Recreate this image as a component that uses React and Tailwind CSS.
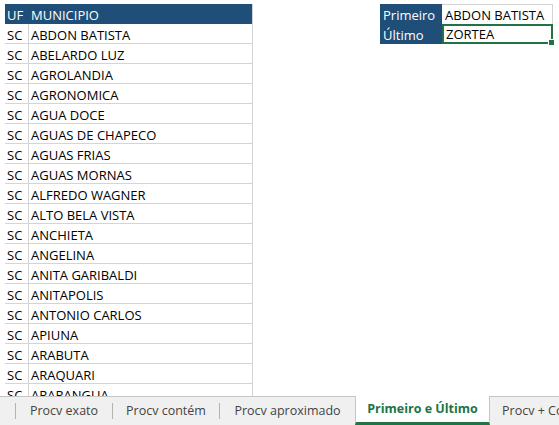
const rows = ["ABDON BATISTA","ABELARDO LUZ","AGROLANDIA","AGRONOMICA","AGUA DOCE","AGUAS DE CHAPECO","AGUAS FRIAS","AGUAS MORNAS","ALFREDO WAGNER","ALTO BELA VISTA","ANCHIETA","ANGELINA","ANITA GARIBALDI","ANITAPOLIS","ANTONIO CARLOS","APIUNA","ARABUTA","ARAQUARI","ARARANGUA"];

export default function App() {
  return (
    <div className="w-[559px] h-[425px] bg-white flex flex-col overflow-hidden" style={{fontFamily: '"Open Sans", "Liberation Sans", sans-serif'}}>
      <div className="flex-1 overflow-hidden flex items-start pt-[4px] pl-[5px] text-[13px] leading-[18px] text-black">
        <div className="w-[248px] border-r border-[#d4d4d4] shrink-0">
          <div className="flex h-[20px] pt-[2px] bg-[#1f4e78] text-white">
            <div className="w-[23px] pl-[2px]">UF</div>
            <div className="flex-1 pl-[3px]">MUNICIPIO</div>
          </div>
          {rows.map((r) => (
            <div key={r} className="flex h-[20px] border-b border-[#d4d4d4]">
              <div className="w-[24px] pl-[2px] pt-[2px] border-r border-[#d4d4d4]">SC</div>
              <div className="flex-1 pl-[2px] pt-[2px]">{r}</div>
            </div>
          ))}
        </div>
        <div className="ml-[127px] flex shrink-0">
          <div className="w-[62px] bg-[#1f4e78] text-white">
            <div className="h-[20px] pl-[3px] pt-[2px]">Primeiro</div>
            <div className="h-[20px] pl-[3px] pt-[2px]">Último</div>
          </div>
          <div className="w-[111px]">
            <div className="h-[20px] pl-[3px] pt-px border-t border-r border-[#d4d4d4] leading-[19px]">ABDON BATISTA</div>
            <div className="relative h-[20px] pl-[2px] border-2 border-[#217346] leading-[17px]">
              ZORTEA
              <div className="absolute right-[-4px] bottom-[-4px] w-[5px] h-[5px] bg-[#217346] border border-white box-content"></div>
            </div>
          </div>
        </div>
      </div>
      <div className="h-[29px] shrink-0 bg-[#f0f0f0] border-t border-[#c6c6c6] flex items-stretch text-[12.5px] text-[#444] whitespace-nowrap" style={{fontFamily: '"Open Sans", "Noto Sans", sans-serif'}}>
        <div className="w-[16px] shrink-0 border-r border-[#b4b4b4] my-[6px]"></div>
        <div className="w-[96px] shrink-0 flex items-center justify-center">Procv exato</div>
        <div className="shrink-0 border-r border-[#b4b4b4] my-[6px]"></div>
        <div className="w-[106px] shrink-0 flex items-center justify-center">Procv contém</div>
        <div className="shrink-0 border-r border-[#b4b4b4] my-[6px]"></div>
        <div className="w-[135px] shrink-0 flex items-center justify-center">Procv aproximado</div>
        <div className="w-[135px] shrink-0 bg-white flex items-center justify-center font-bold text-[#217346] border-b-[3px] border-[#217346] -mt-px border-x border-x-[#c6c6c6]">Primeiro e Último</div>
        <div className="shrink-0 pl-[12px] flex items-center">Procv + Coluna</div>
      </div>
    </div>
  );
}
